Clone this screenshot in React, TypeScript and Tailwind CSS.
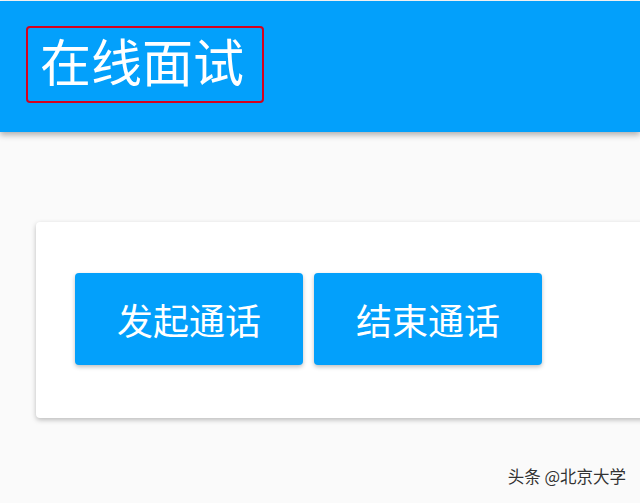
import React, { FC } from 'react'

const font = { fontFamily: '"Noto Sans CJK SC", "Noto Sans", sans-serif' }

const CallButton: FC<{ label: string }> = ({ label }) => (
  <button
    type="button"
    className="flex h-[92px] w-[228px] items-center justify-center rounded-[4px] bg-[#03a0fb] text-[36px] leading-none text-white shadow-[0_2px_4px_rgba(0,0,0,0.25)]"
  >
    {label}
  </button>
)

const App: FC = () => {
  return (
    <div
      className="relative h-[503px] w-[640px] overflow-hidden bg-[#fafafa]"
      style={font}
    >
      {/* HEADER */}
      <div className="relative z-10 mt-px flex h-[131px] items-start bg-[#03a0fb] pl-[26px] pt-[25px] shadow-[0_3px_6px_rgba(0,0,0,0.3)]">
        <div className="flex h-[77px] w-[238px] items-center rounded-[4px] border-2 border-[#d5001c] pl-[12px]">
          <span className="-mt-[8px] text-[51px] leading-none text-white">在线面试</span>
        </div>
      </div>

      {/* CARD */}
      <div className="ml-[36px] mt-[90px] h-[196px] w-[640px] rounded-[4px] bg-white pl-[39px] pt-[51px] shadow-[0_2px_5px_rgba(0,0,0,0.25)]">
        <div className="flex gap-[11px]">
          <CallButton label="发起通话" />
          <CallButton label="结束通话" />
        </div>
      </div>

      {/* watermark */}
      <div className="absolute right-[14px] top-[468px] text-[16.5px] leading-none text-[#333] [text-shadow:0_0_2px_#fff,0_0_2px_#fff]">
        头条 @北京大学
      </div>
    </div>
  )
}

export default App
